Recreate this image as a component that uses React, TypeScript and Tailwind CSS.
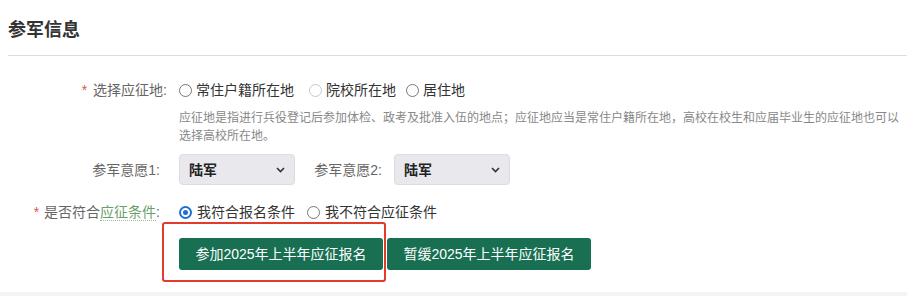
import React from "react";

const font = { fontFamily: '"Liberation Sans", "Noto Sans CJK SC", sans-serif' };

function Radio({ checked = false, light = false }: { checked?: boolean; light?: boolean }) {
  if (checked) {
    return (
      <span className="inline-flex h-[13px] w-[13px] items-center justify-center rounded-full border-[2px] border-[#1d6fd8] bg-white">
        <span className="h-[5px] w-[5px] rounded-full bg-[#1d6fd8]" />
      </span>
    );
  }
  return (
    <span
      className={
        "inline-block h-[13px] w-[13px] rounded-full border bg-white " +
        (light ? "border-[#c8c8c8]" : "border-[#777]")
      }
    />
  );
}

function Select({ value }: { value: string }) {
  return (
    <div className="flex h-[31px] w-[116px] items-center justify-between rounded-[4px] border border-[#dcdce0] bg-[#e9e9ed] pl-[9px] pr-[9px]">
      <span className="text-[14px] font-bold text-[#222]">{value}</span>
      <svg width="9" height="6" viewBox="0 0 9 6">
        <path d="M1 1 L4.5 4.5 L8 1" fill="none" stroke="#333" strokeWidth="1.6" />
      </svg>
    </div>
  );
}

export default function App() {
  return (
    <div className="relative h-[296px] w-[907px] overflow-hidden bg-white" style={font}>
      <div className="pl-2 pt-[19px]">
        <h2 className="text-[18px] font-bold leading-[22px] text-[#333]">参军信息</h2>
        <div className="mt-[14px] border-b border-[#dcdcdc]" />
      </div>

      {/* Row 1 */}
      <div className="mt-[24px] flex items-center text-[14px] leading-[20px]">
        <div className="w-[179px] pr-[12px] text-right text-[#666]">
          <span className="mr-[6px] text-[#d9534f]">*</span>选择应征地:
        </div>
        <div className="flex items-center gap-[2px] text-[#333]">
          <Radio />
          <span className="ml-[2px] mr-[13px]">常住户籍所在地</span>
          <Radio light />
          <span className="ml-[2px] mr-[8px]">院校所在地</span>
          <Radio />
          <span className="ml-[2px]">居住地</span>
        </div>
      </div>
      <div className="ml-[179px] mt-[9px] whitespace-nowrap text-[12px] leading-[18px] text-[#888]">
        应征地是指进行兵役登记后参加体检、政考及批准入伍的地点；应征地应当是常住户籍所在地，高校在校生和应届毕业生的应征地也可以
        <br />
        选择高校所在地。
      </div>

      {/* Row 2 */}
      <div className="mt-[9px] flex items-center text-[14px] leading-[20px]">
        <div className="w-[179px] pr-[19px] text-right text-[#666]">参军意愿1:</div>
        <Select value="陆军" />
        <div className="w-[99px] pr-[12px] text-right text-[#666]">参军意愿2:</div>
        <Select value="陆军" />
      </div>

      {/* Row 3 */}
      <div className="mt-[17px] flex items-center text-[14px] leading-[20px]">
        <div className="w-[179px] pr-[19px] text-right text-[#666]">
          <span className="mr-[5px] text-[#d9534f]">*</span>是否符合
          <span className="border-b border-dotted border-[#9ab89a] text-[#6a9f6a]">应征条件</span>:
        </div>
        <div className="flex items-center text-[#333]">
          <Radio checked />
          <span className="ml-[5px] mr-[12px]">我符合报名条件</span>
          <Radio />
          <span className="ml-[5px]">我不符合应征条件</span>
        </div>
      </div>

      {/* Buttons */}
      <div className="ml-[179px] mt-[16px] flex gap-[4px]">
        <div className="relative">
          <button className="h-[32px] w-[204px] rounded-[3px] bg-[#186f51] text-[14px] text-white">
            参加2025年上半年应征报名
          </button>
          <div className="pointer-events-none absolute left-[-17px] top-[-16px] h-[60px] w-[224px] rounded-[3px] border-[2px] border-[#e23b2e]" />
        </div>
        <button className="h-[32px] w-[204px] rounded-[3px] bg-[#186f51] text-[14px] text-white">
          暂缓2025年上半年应征报名
        </button>
      </div>

      <div className="absolute bottom-0 left-0 h-[4px] w-full bg-[#f4f4f4]" />
    </div>
  );
}
